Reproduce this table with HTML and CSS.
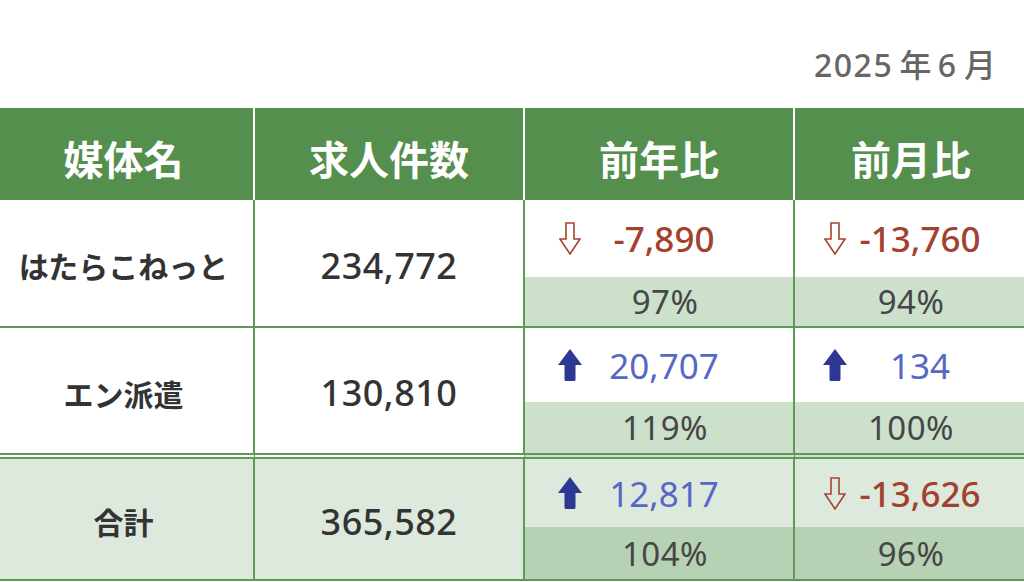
FILE: index.html
```html
<!DOCTYPE html>
<html lang="ja">
<head>
<meta charset="utf-8">
<title>求人件数</title>
<link rel="stylesheet" href="styles.css">
</head>
<body>
<div class="page">
  <div class="date"><span class="dnum">2025</span> 年 <span class="dnum">6</span> 月</div>
  <div class="grid">
    <div class="th">媒体名</div>
    <div class="th">求人件数</div>
    <div class="th">前年比</div>
    <div class="th">前月比</div>

    <div class="name r1">はたらこねっと</div>
    <div class="count r1">234,772</div>
    <div class="chg c3"><span class="arrow"><svg class="down" viewBox="0 0 22 33"><path d="M7 1 H15 V17 H21 L11 32 L1 17 H7 Z"/></svg></span><span class="num neg">-7,890</span></div>
    <div class="chg c4"><span class="arrow"><svg class="down" viewBox="0 0 22 33"><path d="M7 1 H15 V17 H21 L11 32 L1 17 H7 Z"/></svg></span><span class="num neg">-13,760</span></div>
    <div class="pct c3 r1">97%</div>
    <div class="pct c4 r1">94%</div>

    <div class="name r2">エン派遣</div>
    <div class="count r2">130,810</div>
    <div class="chg c3 r2a"><span class="arrow"><svg class="up" viewBox="0 0 24 32"><path d="M12 0 L24 16 H17.5 V30.5 Q17.5 32 16 32 H8 Q6.5 32 6.5 30.5 V16 H0 Z"/></svg></span><span class="num pos">20,707</span></div>
    <div class="chg c4 r2a"><span class="arrow"><svg class="up" viewBox="0 0 24 32"><path d="M12 0 L24 16 H17.5 V30.5 Q17.5 32 16 32 H8 Q6.5 32 6.5 30.5 V16 H0 Z"/></svg></span><span class="num pos">134</span></div>
    <div class="pct c3 r2">119%</div>
    <div class="pct c4 r2">100%</div>

    <div class="name r3 total">合計</div>
    <div class="count r3 total">365,582</div>
    <div class="chg c3 r3a total"><span class="arrow"><svg class="up" viewBox="0 0 24 32"><path d="M12 0 L24 16 H17.5 V30.5 Q17.5 32 16 32 H8 Q6.5 32 6.5 30.5 V16 H0 Z"/></svg></span><span class="num pos">12,817</span></div>
    <div class="chg c4 r3a total"><span class="arrow"><svg class="down" viewBox="0 0 22 33"><path d="M7 1 H15 V17 H21 L11 32 L1 17 H7 Z"/></svg></span><span class="num neg">-13,626</span></div>
    <div class="pct c3 r3 total-sub">104%</div>
    <div class="pct c4 r3 total-sub">96%</div>
  </div>
</div>
</body>
</html>
```

FILE: styles.css
```css
html, body {
  margin: 0;
  padding: 0;
  overflow: hidden;
  background: #ffffff;
}

.page {
  width: 1024px;
  height: 582px;
  overflow: hidden;
  font-family: "Noto Sans", "Noto Sans CJK JP", sans-serif;
}

.date {
  height: 108px;
  box-sizing: border-box;
  padding: 45px 28px 0 0;
  text-align: right;
  font-size: 32px;
  line-height: 40px;
  font-weight: 500;
  color: #666666;
  word-spacing: -2px;
}

.dnum {
  letter-spacing: 1.5px;
}

.grid {
  display: grid;
  margin-left: -6px;
  width: 1035px;
  grid-template-columns: 261px 270px 270px 234px;
  grid-template-rows: 92px 77px 51px 74px 57px 68px 54px;
}

.th {
  background: #558f4e;
  color: #ffffff;
  font-family: "Noto Sans CJK JP", sans-serif;
  font-size: 40px;
  font-weight: 700;
  border-right: 2px solid #ffffff;
  display: flex;
  align-items: center;
  justify-content: center;
  padding-top: 8px;
}

.name, .count {
  grid-row: span 2;
  display: flex;
  align-items: center;
  justify-content: center;
  color: #333333;
  border-right: 2px solid #5c9a56;
  border-bottom: 2px solid #5c9a56;
  padding-top: 4px;
}

.name {
  font-family: "Noto Sans CJK JP", sans-serif;
  font-size: 30px;
  font-weight: 700;
}

.count {
  font-size: 36px;
  letter-spacing: 0.5px;
  font-weight: 500;
}

.chg {
  display: flex;
  align-items: center;
  border-right: 2px solid #5c9a56;
  background: #ffffff;
}

.chg.c3 { padding: 0 47px 0 33px; }
.chg.c4 { padding: 0 34px 0 28px; }

.arrow {
  width: 24px;
  height: 33px;
  display: flex;
  align-items: center;
  justify-content: center;
  flex: none;
}

.arrow svg.down {
  width: 22px;
  height: 33px;
}
.arrow svg.down path {
  fill: none;
  stroke: #a8412f;
  stroke-width: 1.6;
  stroke-linejoin: miter;
}

.arrow svg.up {
  width: 24px;
  height: 32px;
}
.arrow svg.up path {
  fill: #2c3894;
}

.num {
  flex: 1;
  text-align: center;
  font-size: 35px;
}

.num.neg {
  color: #a3412f;
  font-weight: 500;
}

.num.pos {
  color: #5767c6;
  font-weight: 400;
}

.pct {
  display: flex;
  align-items: center;
  justify-content: center;
  background: #cce0cb;
  color: #464646;
  font-size: 33px;
  letter-spacing: 0.5px;
  border-right: 2px solid #5c9a56;
  border-bottom: 2px solid #5c9a56;
}

.pct.c3 { padding-left: 12px; }

.r2 {
  border-bottom: 6px double #5c9a56;
}

.total {
  background: #dde9dc;
}

.total-sub {
  background: #b6d1b3;
}
```
